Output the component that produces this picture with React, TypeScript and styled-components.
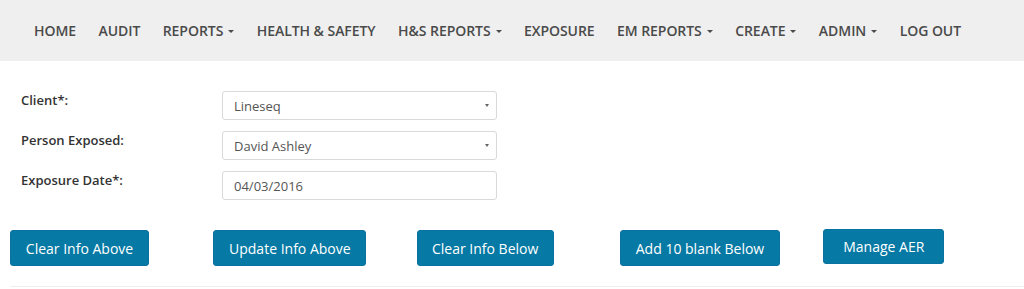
import {FC} from 'react'
import styled, {createGlobalStyle} from 'styled-components'

const GlobalStyle = createGlobalStyle`
  html, body {
    margin: 0;
    padding: 0;
    background: #fff;
    font-family: 'Open Sans', 'Liberation Sans', sans-serif;
  }
`

const NavBar = styled.nav`
  height: 61px;
  background: #efefef;
  display: flex;
  align-items: center;
  padding-left: 34px;
  gap: 22.4px;
`

const NavItem = styled.a`
  font-size: 14px;
  font-weight: 600;
  color: #4a4a4a;
  text-transform: uppercase;
  text-decoration: none;
  white-space: nowrap;
  display: flex;
  align-items: center;
  line-height: 20px;
  margin-top: 1px;
  letter-spacing: -0.05px;
`

const Caret = styled.span`
  display: inline-block;
  width: 0;
  height: 0;
  margin-left: 5px;
  border-top: 3px solid #4a4a4a;
  border-left: 3px solid transparent;
  border-right: 3px solid transparent;
`

const Form = styled.div`
  padding: 30px 0 0 21px;
  display: flex;
  flex-direction: column;
  gap: 11px;
`

const Row = styled.div`
  display: grid;
  grid-template-columns: 201px 275px;
  align-items: start;
`

const Label = styled.label`
  font-size: 13px;
  font-weight: 600;
  color: #333;
  line-height: 18px;
`

const Field = styled.div`
  position: relative;
  height: 29px;
  box-sizing: border-box;
  border: 1px solid #d9d9d9;
  border-radius: 3px;
  padding: 0 11px;
  display: flex;
  align-items: center;
  font-size: 13px;
  color: #555;
  background: #fff;
`

const SelectArrow = styled.span`
  position: absolute;
  right: 7px;
  top: 12px;
  width: 0;
  height: 0;
  border-top: 3px solid #666;
  border-left: 2px solid transparent;
  border-right: 2px solid transparent;
`

const ButtonRow = styled.div`
  display: grid;
  grid-template-columns: repeat(5, 203.33px);
  padding: 30px 0 0 10px;
  align-items: start;
`

const ActionButton = styled.button<{$w: number; $h?: number; $up?: boolean}>`
  width: ${p => p.$w}px;
  height: ${p => p.$h ?? 36}px;
  margin-top: ${p => (p.$up ? -1 : 0)}px;
  background: #0679a4;
  border: 1px solid #0a72a0;
  border-radius: 3px;
  color: #fff;
  font-family: 'Open Sans', 'Liberation Sans', sans-serif;
  font-size: 14px;
  padding: 0;
  cursor: pointer;
`

const Divider = styled.hr`
  margin: 20px 0 0 10px;
  border: 0;
  border-top: 1px solid #eeeeee;
`

const navItems: {label: string; caret?: boolean}[] = [
  {label: 'Home'},
  {label: 'Audit'},
  {label: 'Reports', caret: true},
  {label: 'Health & Safety'},
  {label: 'H&S Reports', caret: true},
  {label: 'Exposure'},
  {label: 'EM Reports', caret: true},
  {label: 'Create', caret: true},
  {label: 'Admin', caret: true},
  {label: 'Log Out'},
]

const App: FC = () => {
  return (
    <>
      <GlobalStyle />
      <NavBar>
        {navItems.map(item => (
          <NavItem key={item.label} href="#">
            {item.label}
            {item.caret && <Caret />}
          </NavItem>
        ))}
      </NavBar>

      <Form>
        <Row>
          <Label>Client*:</Label>
          <Field>
            Lineseq
            <SelectArrow />
          </Field>
        </Row>
        <Row>
          <Label>Person Exposed:</Label>
          <Field>
            David Ashley
            <SelectArrow />
          </Field>
        </Row>
        <Row>
          <Label>Exposure Date*:</Label>
          <Field>04/03/2016</Field>
        </Row>
      </Form>

      <ButtonRow>
        <div>
          <ActionButton $w={139}>Clear Info Above</ActionButton>
        </div>
        <div>
          <ActionButton $w={153}>Update Info Above</ActionButton>
        </div>
        <div>
          <ActionButton $w={137}>Clear Info Below</ActionButton>
        </div>
        <div>
          <ActionButton $w={160}>Add 10 blank Below</ActionButton>
        </div>
        <div>
          <ActionButton $w={121} $h={35} $up>
            Manage AER
          </ActionButton>
        </div>
      </ButtonRow>
      <Divider />
    </>
  )
}

export default App
